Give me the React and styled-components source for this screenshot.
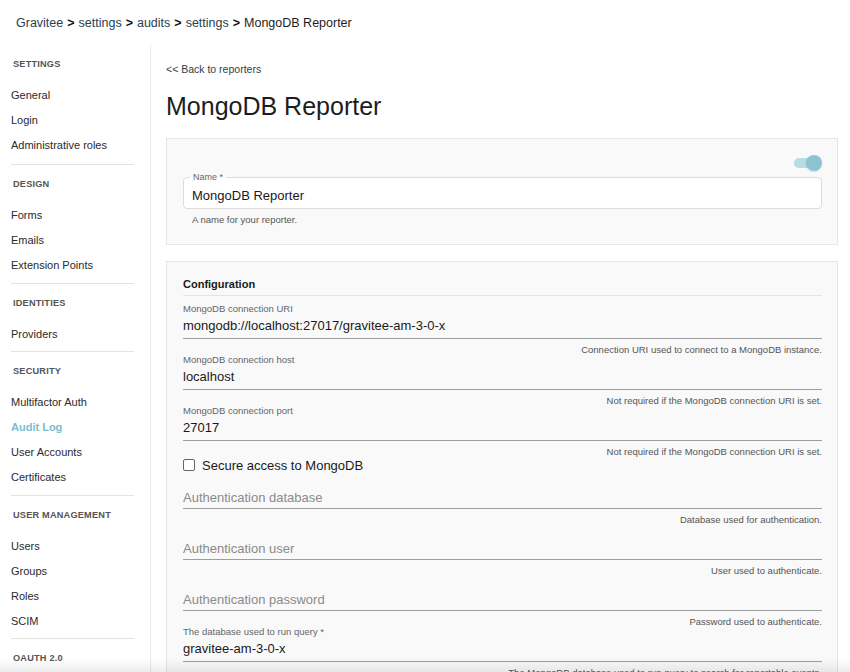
import React from "react";
import styled, { createGlobalStyle } from "styled-components";

const GlobalStyle = createGlobalStyle`
  html, body {
    margin: 0;
    padding: 0;
    background: #ffffff;
    font-family: "Liberation Sans", Arial, Helvetica, sans-serif;
    color: #222;
  }
  * {
    box-sizing: border-box;
  }
`;

const Page = styled.div`
  width: 850px;
  min-height: 672px;
  display: flex;
  flex-direction: column;
`;

const Breadcrumb = styled.div`
  height: 45px;
  padding: 15px 0 0 16px;
  font-size: 12.5px;
  line-height: 16px;
  color: #2c3e50;
  span.sep {
    color: #111;
    font-weight: bold;
    margin: 0 4px;
  }
  span.current {
    color: #1e1e1e;
  }
`;

const Body = styled.div`
  display: flex;
  flex: 1;
`;

const Sidebar = styled.nav`
  width: 151px;
  flex-shrink: 0;
  border-right: 1px solid #ebebeb;
  padding: 0 16px 0 11px;
`;

const SectionTitle = styled.div`
  margin-top: 9px;
  margin-left: 2px;
  line-height: 20px;
  font-size: 9.2px;
  font-weight: bold;
  letter-spacing: 0.2px;
  color: #555;
  text-transform: uppercase;
`;

const NavList = styled.div`
  margin-top: 9px;
  display: flex;
  flex-direction: column;
`;

const NavItem = styled.a`
  line-height: 25px;
  font-size: 11px;
  color: ${(p) => (p.active ? "#7cbccd" : "#2a2a2a")};
  font-weight: ${(p) => (p.active ? "bold" : "normal")};
  text-decoration: none;
  white-space: nowrap;
`;

const Divider = styled.hr`
  border: none;
  border-top: 1px solid #e3e3e3;
  margin: ${(p) => (p.first ? "6px" : "4.5px")} 0 0;
`;

const Main = styled.main`
  flex: 1;
  padding: 17px 12px 0 15px;
`;

const BackLink = styled.a`
  display: block;
  font-size: 10.5px;
  line-height: 14px;
  color: #2c3e50;
  text-decoration: none;
`;

const Title = styled.h1`
  margin: 15px 0 0;
  font-size: 25px;
  line-height: 30px;
  font-weight: normal;
  color: #1d1d1d;
`;

const Card = styled.section`
  background: #f9f9f9;
  border: 1px solid #e6e6e6;
  margin-top: ${(p) => p.top || "16px"};
  padding: ${(p) => p.pad || "16px"};
`;

const ToggleRow = styled.div`
  display: flex;
  justify-content: flex-end;
  height: 16px;
`;

const Toggle = styled.div`
  position: relative;
  width: 28px;
  height: 16px;
  &::before {
    content: "";
    position: absolute;
    left: 0;
    top: 3px;
    width: 24px;
    height: 10px;
    border-radius: 5px;
    background: #b8dce5;
  }
  &::after {
    content: "";
    position: absolute;
    right: 0;
    top: 0;
    width: 16px;
    height: 16px;
    border-radius: 50%;
    background: #8cc3d1;
    box-shadow: 0 1px 2px rgba(0, 0, 0, 0.12);
  }
`;

const OutlineBox = styled.div`
  position: relative;
  margin-top: 6px;
  height: 32px;
  background: #fff;
  border: 1px solid #dcdcdc;
  border-radius: 4px;
  padding: 9px 0 0 8px;
  font-size: 13px;
  line-height: 18px;
  color: #1a1a1a;
`;

const OutlineLabel = styled.span`
  position: absolute;
  top: -7px;
  left: 6px;
  padding: 0 3px;
  font-size: 9px;
  line-height: 12px;
  color: #666;
  background: linear-gradient(#f9f9f9 50%, #fff 50%);
`;

const Hint = styled.div`
  margin-top: 6px;
  font-size: 9.5px;
  line-height: 10px;
  color: #555;
  padding-left: ${(p) => (p.left ? "9px" : "0")};
  text-align: ${(p) => (p.left ? "left" : "right")};
  white-space: nowrap;
`;

const SectionHeading = styled.div`
  font-size: 11px;
  font-weight: bold;
  line-height: 14px;
  color: #1a1a1a;
  padding-bottom: 4px;
  border-bottom: 1px solid #e4e4e4;
  margin-bottom: 8px;
`;

const Field = styled.div`
  display: flex;
  flex-direction: column;
`;

const FieldLabel = styled.div`
  height: 10px;
  font-size: 9.5px;
  line-height: 10px;
  color: #666;
  white-space: nowrap;
`;

const FieldInput = styled.div`
  height: 25px;
  border-bottom: 1px solid #9e9e9e;
  font-size: 13px;
  line-height: 24px;
  padding-top: ${(p) => (p.placeholder ? "2px" : "0")};
  color: ${(p) => (p.placeholder ? "#8a8a8a" : "#1a1a1a")};
  white-space: nowrap;
`;

const CheckRow = styled.label`
  display: flex;
  align-items: center;
  gap: 7px;
  height: 18px;
  margin-top: -1px;
  font-size: 13px;
  color: #1a1a1a;
`;

const Checkbox = styled.span`
  width: 12px;
  height: 12px;
  border: 1.5px solid #666;
  border-radius: 2px;
  background: #fff;
`;

const BottomFade = styled.div`
  position: fixed;
  left: 0;
  right: 0;
  bottom: 0;
  height: 14px;
  background: linear-gradient(rgba(0, 0, 0, 0), rgba(0, 0, 0, 0.07));
  pointer-events: none;
`;

const nav = [
  { title: "Settings", items: ["General", "Login", "Administrative roles"] },
  { title: "Design", items: ["Forms", "Emails", "Extension Points"] },
  { title: "Identities", items: ["Providers"] },
  {
    title: "Security",
    items: ["Multifactor Auth", "Audit Log", "User Accounts", "Certificates"],
  },
  { title: "User Management", items: ["Users", "Groups", "Roles", "SCIM"] },
  { title: "OAuth 2.0", items: [] },
];

const fields = [
  {
    label: "MongoDB connection URI",
    value: "mongodb://localhost:27017/gravitee-am-3-0-x",
    hint: "Connection URI used to connect to a MongoDB instance.",
  },
  {
    label: "MongoDB connection host",
    value: "localhost",
    hint: "Not required if the MongoDB connection URI is set.",
  },
  {
    label: "MongoDB connection port",
    value: "27017",
    hint: "Not required if the MongoDB connection URI is set.",
  },
];

const authFields = [
  { placeholder: "Authentication database", hint: "Database used for authentication." },
  { placeholder: "Authentication user", hint: "User used to authenticate." },
  { placeholder: "Authentication password", hint: "Password used to authenticate." },
  {
    label: "The database used to run query *",
    value: "gravitee-am-3-0-x",
    hint: "The MongoDB database used to run query to search for reportable events.",
  },
];

function FormField({ label, value, placeholder, hint }) {
  return (
    <Field>
      <FieldLabel>{label || ""}</FieldLabel>
      <FieldInput placeholder={placeholder ? 1 : undefined}>
        {value || placeholder}
      </FieldInput>
      <Hint>{hint}</Hint>
    </Field>
  );
}

export default function App() {
  const crumbs = ["Gravitee", "settings", "audits", "settings"];
  return (
    <Page>
      <GlobalStyle />
      <Breadcrumb>
        {crumbs.map((c, i) => (
          <React.Fragment key={i}>
            <span>{c}</span>
            <span className="sep">&gt;</span>
          </React.Fragment>
        ))}
        <span className="current">MongoDB Reporter</span>
      </Breadcrumb>
      <Body>
        <Sidebar>
          {nav.map((section, i) => (
            <div key={section.title}>
              <SectionTitle>{section.title}</SectionTitle>
              {section.items.length > 0 && (
                <NavList>
                  {section.items.map((item) => (
                    <NavItem key={item} active={item === "Audit Log"}>
                      {item}
                    </NavItem>
                  ))}
                </NavList>
              )}
              {section.items.length > 0 && <Divider first={i === 0} />}
            </div>
          ))}
        </Sidebar>
        <Main>
          <BackLink>&lt;&lt; Back to reporters</BackLink>
          <Title>MongoDB Reporter</Title>
          <Card top="17px" pad="16px 15px 19px 16px">
            <ToggleRow>
              <Toggle />
            </ToggleRow>
            <OutlineBox>
              <OutlineLabel>Name *</OutlineLabel>
              MongoDB Reporter
            </OutlineBox>
            <Hint left>A name for your reporter.</Hint>
          </Card>
          <Card top="16px" pad="15px 15px 40px 16px">
            <SectionHeading>Configuration</SectionHeading>
            {fields.map((f) => (
              <FormField key={f.label} {...f} />
            ))}
            <CheckRow>
              <Checkbox />
              Secure access to MongoDB
            </CheckRow>
            {authFields.map((f) => (
              <FormField key={f.hint} {...f} />
            ))}
          </Card>
        </Main>
      </Body>
      <BottomFade />
    </Page>
  );
}
